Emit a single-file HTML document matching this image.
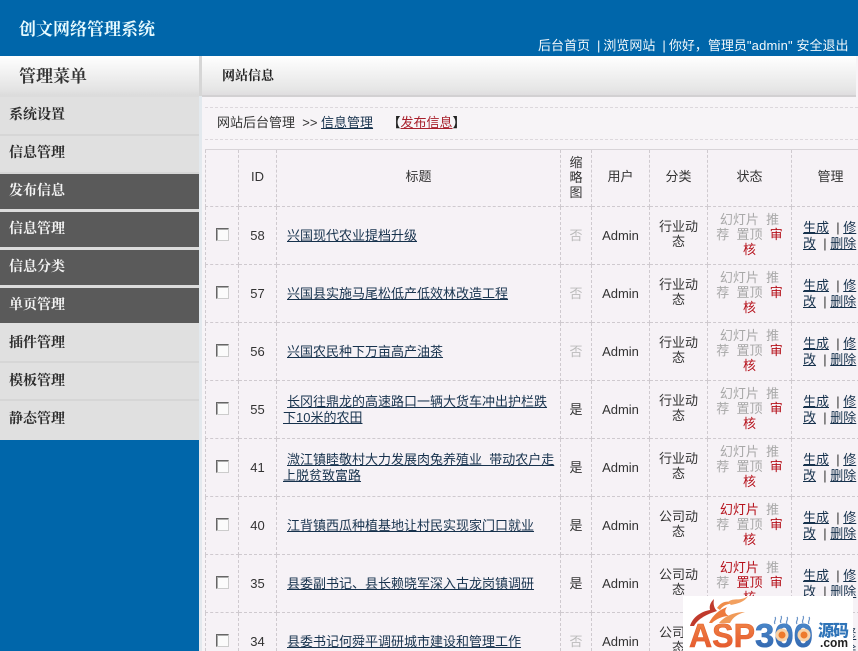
<!DOCTYPE html>
<html lang="zh"><head><meta charset="utf-8"><title>创文网络管理系统</title>
<style>
*{box-sizing:border-box}
html,body{margin:0;padding:0;width:858px;height:651px;overflow:hidden}
#page{width:858px;height:651px;overflow:hidden;position:relative;background:#f7f4f7;font:13px/16px "Liberation Sans","WenQuanYi Zen Hei","Noto Sans CJK SC",sans-serif;color:#333}
a{color:#17324d;text-decoration:underline}
#top{position:absolute;left:0;top:0;width:858px;height:56px;background:#0066aa}
#logo{position:absolute;left:19px;top:20px;font:bold 17px/20px "Liberation Serif","Noto Serif CJK SC",serif;color:#e8fbff;white-space:nowrap}
#toplinks{position:absolute;left:538px;top:38px;color:#f2f8fb;white-space:nowrap;line-height:16px}
#toplinks i{font-style:normal;margin:0 3px 0 7px}
#toplinks b{font-weight:normal;letter-spacing:.2px}
#side{position:absolute;left:0;top:56px;width:199px;height:595px;background:#0066aa}
#back{position:absolute;left:0;top:0;width:199px;height:384px;background:#dcdcdc}
#gut{position:absolute;left:199px;top:96px;width:3px;height:555px;background:#e3e9ee}
#gut2{position:absolute;left:199px;top:56px;width:3px;height:41px;background:#d6d6d6}
.st{position:absolute;left:0;top:0;width:199px;height:39px;background:linear-gradient(#fff,#e4e4e4 85%,#dcdcdc);font:bold 17px/41px "Liberation Serif","Noto Serif CJK SC",serif;padding-left:19px;color:#333}
.m{position:absolute;left:0;width:199px;font:bold 14px/18px "Liberation Serif","Noto Serif CJK SC",serif;padding-left:9px;padding-top:9px}
.l{background:#e0e0e0;height:38px;color:#2b2b2b;border-bottom:2px solid #d6d6d6}
.d{background:#5a5a5a;color:#f4f4f4;height:35px}
#title{position:absolute;left:202px;top:56px;width:654px;height:41px;background:linear-gradient(#fff,#e6e6e6 85%,#dfdddf);border-bottom:2px solid #d2d0d2;font:bold 13px/39px "Liberation Serif","Noto Serif CJK SC",serif;padding-left:20px;color:#222}
#crumb{position:absolute;left:205px;top:107px;width:653px;height:33px;border-top:1px dashed #ddd8dd;border-bottom:1px dashed #ddd8dd;padding:6px 0 0 12px;white-space:pre;line-height:17px}
#crumb a.r{color:#a8202c}
#crumb b{color:#222}
#tbl{position:absolute;left:205px;top:149px;width:664px;border-collapse:collapse;table-layout:fixed;background:#f6f2f6}
#tbl td{border:1px dashed #cfcacf;text-align:center;vertical-align:middle;padding:0;height:58px;overflow:hidden}
#tbl tr:first-child td{height:57px;border-top:1px solid #d8d4d8;padding-bottom:2px}
#tbl td.t{text-align:left;padding:0 5px 0 6px;text-indent:4px;line-height:16px}
#tbl td.c{line-height:15px;padding:0 8px 3px}
#tbl td.s{line-height:15px;color:#a8a8a8;white-space:nowrap;padding-bottom:2px}
#tbl td.o{text-align:left;padding:1px 0 0 11px;line-height:16px;white-space:nowrap}
#tbl td.x{padding-bottom:2px}
.r{color:#b5101a}
.n{color:#bbb}
.cb{display:block;width:13px;height:13px;margin:0 0 0 10px;background:#fbfbfb;border:1px solid;border-color:#666 #ccc #ccc #666;box-shadow:inset 1px 1px 0 #aaa}
#wm{position:absolute;left:683px;top:596px;width:170px;height:55px;background:#fff}
</style></head><body>
<div id="page">
<div id="top">
<div id="logo">创文网络管理系统</div>
<div id="toplinks">后台首页<i>|</i>浏览网站<i>|</i>你好，管理员<b>"admin"</b> 安全退出</div>
</div>
<div id="side">
<div id="back"></div>
<div class="st">管理菜单</div>
<div class="m l" style="top:41px;height:39px;padding-top:10px">系统设置</div>
<div class="m l" style="top:80px;height:38px">信息管理</div>
<div class="m d" style="top:118px">发布信息</div>
<div class="m d" style="top:156px">信息管理</div>
<div class="m d" style="top:194px">信息分类</div>
<div class="m d" style="top:232px">单页管理</div>
<div class="m l" style="top:267px;height:40px;padding-top:12px">插件管理</div>
<div class="m l" style="top:307px;padding-top:10px">模板管理</div>
<div class="m l" style="top:345px;height:39px;border:0;padding-top:10px">静态管理</div>
</div>
<div id="gut2"></div>
<div id="gut"></div>
<div id="title">网站信息</div>
<div id="crumb">网站后台管理  &gt;&gt; <a href="#">信息管理</a>    <b>【</b><a class="r" href="#">发布信息</a><b>】</b></div>
<table id="tbl">
<colgroup><col style="width:33px"><col style="width:38px"><col style="width:284px"><col style="width:31px"><col style="width:58px"><col style="width:58px"><col style="width:84px"><col style="width:78px"></colgroup>
<tr><td></td><td>ID</td><td>标题</td><td style="line-height:15px">缩<br>略<br>图</td><td>用户</td><td>分类</td><td>状态</td><td>管理</td></tr>
<tr><td class="x"><span class="cb"></span></td><td>58</td><td class="t"><a href="#">兴国现代农业提档升级</a></td><td class="n">否</td><td>Admin</td><td class="c">行业动态</td><td class="s">幻灯片 &nbsp;推<br>荐 &nbsp;置顶 &nbsp;<span class="r">审<br>核</span></td><td class="o"><a href="#">生成</a> &nbsp;| <a href="#">修<br>改</a> &nbsp;| <a href="#">删除</a></td></tr>
<tr><td class="x"><span class="cb"></span></td><td>57</td><td class="t"><a href="#">兴国县实施马尾松低产低效林改造工程</a></td><td class="n">否</td><td>Admin</td><td class="c">行业动态</td><td class="s">幻灯片 &nbsp;推<br>荐 &nbsp;置顶 &nbsp;<span class="r">审<br>核</span></td><td class="o"><a href="#">生成</a> &nbsp;| <a href="#">修<br>改</a> &nbsp;| <a href="#">删除</a></td></tr>
<tr><td class="x"><span class="cb"></span></td><td>56</td><td class="t"><a href="#">兴国农民种下万亩高产油茶</a></td><td class="n">否</td><td>Admin</td><td class="c">行业动态</td><td class="s">幻灯片 &nbsp;推<br>荐 &nbsp;置顶 &nbsp;<span class="r">审<br>核</span></td><td class="o"><a href="#">生成</a> &nbsp;| <a href="#">修<br>改</a> &nbsp;| <a href="#">删除</a></td></tr>
<tr><td class="x"><span class="cb"></span></td><td>55</td><td class="t"><a href="#">长冈往鼎龙的高速路口一辆大货车冲出护栏跌下10米的农田</a></td><td>是</td><td>Admin</td><td class="c">行业动态</td><td class="s">幻灯片 &nbsp;推<br>荐 &nbsp;置顶 &nbsp;<span class="r">审<br>核</span></td><td class="o"><a href="#">生成</a> &nbsp;| <a href="#">修<br>改</a> &nbsp;| <a href="#">删除</a></td></tr>
<tr><td class="x"><span class="cb"></span></td><td>41</td><td class="t"><a href="#">溦江镇睦敬村大力发展肉兔养殖业 &nbsp;带动农户走上脱贫致富路</a></td><td>是</td><td>Admin</td><td class="c">行业动态</td><td class="s">幻灯片 &nbsp;推<br>荐 &nbsp;置顶 &nbsp;<span class="r">审<br>核</span></td><td class="o"><a href="#">生成</a> &nbsp;| <a href="#">修<br>改</a> &nbsp;| <a href="#">删除</a></td></tr>
<tr><td class="x"><span class="cb"></span></td><td>40</td><td class="t"><a href="#">江背镇西瓜种植基地让村民实现家门口就业</a></td><td>是</td><td>Admin</td><td class="c">公司动态</td><td class="s"><span class="r">幻灯片</span> &nbsp;推<br>荐 &nbsp;置顶 &nbsp;<span class="r">审<br>核</span></td><td class="o"><a href="#">生成</a> &nbsp;| <a href="#">修<br>改</a> &nbsp;| <a href="#">删除</a></td></tr>
<tr><td class="x"><span class="cb"></span></td><td>35</td><td class="t"><a href="#">县委副书记、县长赖晓军深入古龙岗镇调研</a></td><td>是</td><td>Admin</td><td class="c">公司动态</td><td class="s"><span class="r">幻灯片</span> &nbsp;推<br>荐 &nbsp;<span class="r">置顶</span> &nbsp;<span class="r">审<br>核</span></td><td class="o"><a href="#">生成</a> &nbsp;| <a href="#">修<br>改</a> &nbsp;| <a href="#">删除</a></td></tr>
<tr><td class="x"><span class="cb"></span></td><td>34</td><td class="t"><a href="#">县委书记何舜平调研城市建设和管理工作</a></td><td class="n">否</td><td>Admin</td><td class="c">公司动态</td><td class="s">幻灯片 &nbsp;推<br>荐 &nbsp;置顶 &nbsp;<span class="r">审<br>核</span></td><td class="o"><a href="#">生成</a> &nbsp;| <a href="#">修<br>改</a> &nbsp;| <a href="#">删除</a></td></tr>
</table>
<div id="wm">
<svg width="170" height="55" viewBox="0 0 170 55" xmlns="http://www.w3.org/2000/svg">
<defs><linearGradient id="gr" x1="0" x2="0" y1="0" y2="1"><stop offset="0" stop-color="#f08a4a"/><stop offset="1" stop-color="#e4512a"/></linearGradient>
<linearGradient id="gb" x1="0" x2="0" y1="0" y2="1"><stop offset="0" stop-color="#4e8fd0"/><stop offset="1" stop-color="#2f62ab"/></linearGradient></defs>
<path d="M7 30C10 20 20 15 27 14C26 9 28 6 31 3C30 8 31 12 34 15C28 17 16 21 11 30Z" fill="#c03a2c"/>
<path d="M26 27C30 19 36 14 44 11C41 15 42 18 46 20C40 20 33 23 29 27Z" fill="#ee7a3c"/>
<path d="M36 27C41 21 50 16 62 16C55 18 50 21 47 27Z" fill="#f09a58"/>
<path d="M34 12C38 6 44 4 50 7C45 8 40 9 37 14Z" fill="#ef8c4a"/>
<path d="M45 6C51 1 57 6 65 0C61 7 52 8 48 9Z" fill="#f2a060"/>
<text x="6" y="51" font-family="Liberation Sans,sans-serif" font-weight="700" font-size="33" textLength="66" lengthAdjust="spacingAndGlyphs" fill="url(#gr)" stroke="#e4602c" stroke-width=".6">ASP</text>
<text x="72" y="51" font-family="Liberation Sans,sans-serif" font-weight="700" font-size="33" textLength="58" lengthAdjust="spacingAndGlyphs" fill="url(#gb)" stroke="#3a70b8" stroke-width=".6">300</text>
<circle cx="99" cy="39" r="6.5" fill="#f8d2a8"/><circle cx="121" cy="39" r="6.5" fill="#f8d2a8"/>
<circle cx="99" cy="39" r="3.5" fill="#ee7a2c"/><circle cx="121" cy="39" r="3.5" fill="#ee7a2c"/>
<path d="M92 28c-2-3 2-4 0-7M98 27c-2-3 2-4 0-7M104 28c-2-3 2-4 0-7M114 28c-2-3 2-4 0-7M120 27c-2-3 2-4 0-7M126 28c-2-3 2-4 0-7" fill="none" stroke="#6a94c8" stroke-width="1.2"/>
<text x="135" y="40" font-family="Noto Sans CJK SC,sans-serif" font-weight="900" font-size="16" textLength="31" fill="#2f74b8">源码</text>
<text x="137" y="51" font-family="Liberation Sans,sans-serif" font-weight="700" font-size="13" textLength="28" lengthAdjust="spacingAndGlyphs" fill="#222">.com</text>
</svg>
</div>
</div>
</body></html>
